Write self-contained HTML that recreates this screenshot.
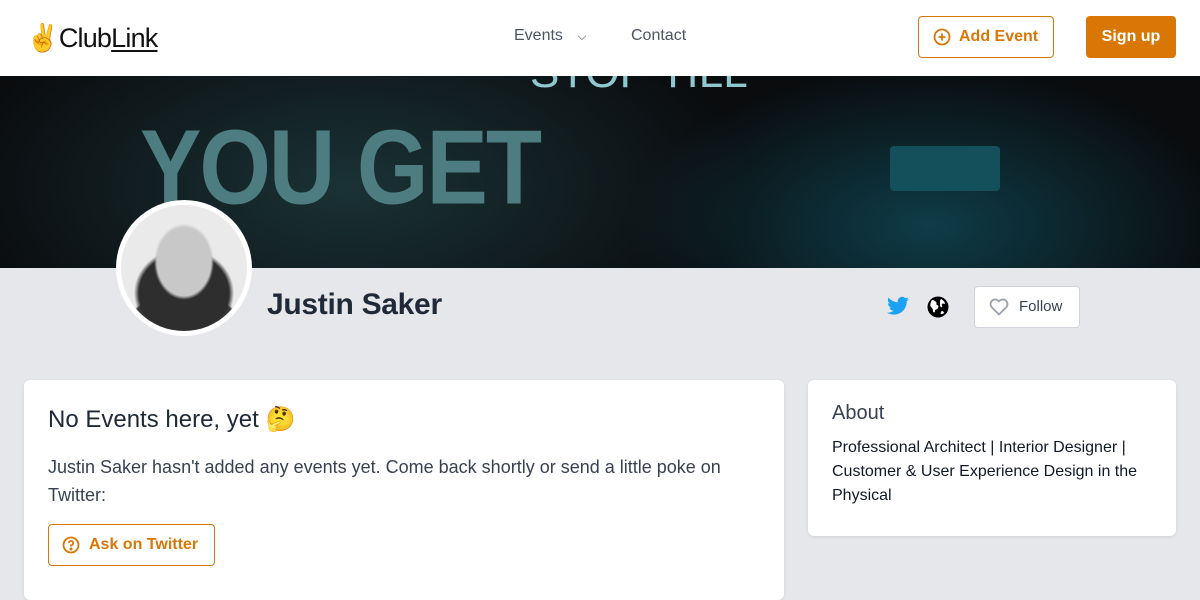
<!DOCTYPE html>
<html><head><meta charset="utf-8"><style>
*{box-sizing:border-box;margin:0;padding:0}
body{width:1200px;height:580px;overflow:hidden;background:#e5e7eb;font-family:"Liberation Sans","Noto Sans CJK JP",sans-serif;color:#111827;position:relative}
.nav{position:absolute;left:0;top:0;width:1200px;height:76px;background:#fff}
.logo{position:absolute;left:26px;top:22px;font-size:27px;color:#111;letter-spacing:-0.8px}
.logo u{text-decoration-thickness:2px;text-underline-offset:3px}
.nl{position:absolute;top:27px;font-size:16px;color:#4b5563}
.btn1{position:absolute;left:918px;top:16px;width:136px;height:42px;border:1px solid #d97706;border-radius:4px;color:#d97706;font-size:16px;font-weight:bold;line-height:40px;padding-left:40px}
.btn2{position:absolute;left:1086px;top:16px;width:90px;height:42px;background:#d97706;border-radius:4px;color:#fff;font-size:16px;font-weight:bold;line-height:42px;text-align:center}
.ban{position:absolute;left:0;top:76px;width:1200px;height:192px;background:radial-gradient(ellipse 300px 160px at 930px 150px,#0e3c48,transparent),radial-gradient(ellipse 400px 200px at 350px 110px,#1a3236,transparent),#0a0c0e;overflow:hidden}
.ban .t{position:absolute;left:140px;top:40px;font-size:92px;font-weight:bold;color:#4d7d80;letter-spacing:-2px;transform:scaleY(1.15)}
.av{position:absolute;left:116px;top:200px;width:136px;height:136px;border-radius:50%;background:#fff;padding:5px}
.av div{width:126px;height:126px;border-radius:50%;background:radial-gradient(ellipse 30px 38px at 50% 45%,#c8c8c8 0 90%,transparent 100%),radial-gradient(ellipse 50px 45px at 50% 70%,#2e2e2e 0 90%,transparent 100%),radial-gradient(ellipse 60px 40px at 50% 100%,#3c3c3c 0 95%,transparent 100%),#eaeaea}
.name{position:absolute;left:267px;top:288px;font-size:30px;font-weight:bold;color:#1f2937;letter-spacing:-0.3px}
.fol{position:absolute;left:974px;top:286px;width:106px;height:42px;background:#fff;border:1px solid #d1d5db;border-radius:4px;font-size:15px;color:#374151;line-height:40px;padding-left:44px}
.card{position:absolute;background:#fff;border-radius:6px;box-shadow:0 1px 3px rgba(0,0,0,.1)}
</style></head><body>
<div class="nav">
<div class="logo">✌️Club<u>Link</u></div>
<div class="nl" style="left:514px">Events <span style="margin-left:10px;font-size:12px">⌵</span></div>
<div class="nl" style="left:631px">Contact</div>
<div class="btn1"><svg style="position:absolute;left:14px;top:11px" width="18" height="18" viewBox="0 0 18 18" fill="none" stroke="#d97706" stroke-width="1.8"><circle cx="9" cy="9" r="7.5"/><path d="M9 5.5v7M5.5 9h7"/></svg>Add Event</div>
<div class="btn2">Sign up</div>
</div>
<div class="ban"><div class="t">YOU GET</div><div style="position:absolute;left:530px;top:-28px;font-size:44px;color:#a8e8f0;opacity:.85">STOP TILL</div><div style="position:absolute;left:890px;top:70px;width:110px;height:45px;background:#14505c;border-radius:4px"></div></div>
<div class="av"><div></div></div>
<div class="name">Justin Saker</div>
<svg style="position:absolute;left:887px;top:296px" width="22" height="20" viewBox="0 0 24 20"><path fill="#1da1f2" d="M24 2.4a10 10 0 0 1-2.8.8A5 5 0 0 0 23.3.4a10 10 0 0 1-3.1 1.2A4.9 4.9 0 0 0 11.8 6 14 14 0 0 1 1.7.9a4.9 4.9 0 0 0 1.5 6.6A5 5 0 0 1 1 6.9a4.9 4.9 0 0 0 3.9 4.8 5 5 0 0 1-2.2.1 4.9 4.9 0 0 0 4.6 3.4A9.9 9.9 0 0 1 0 17.2 14 14 0 0 0 7.5 19.4c9 0 14-7.5 14-14v-.6A10 10 0 0 0 24 2.4z"/></svg>
<svg style="position:absolute;left:927px;top:296px" width="22" height="22" viewBox="0 0 22 22"><circle cx="11" cy="11" r="10.5" fill="#000"/><path fill="#fff" d="M5 4c2 0 3 1 4 2s0 3 1 3 2 1 1 3-3 1-3 3-2 2-2 0-1-3-2-4-1-4 1-7zM14 3c2 1 4 3 4 5-1 0-2-1-3 0s1 2 0 3-2-1-2-2 0-2 0-3 0-2 1-3zM15 15c1 0 2 1 2 2-1 1-2 1-3 1s0-3 1-3z"/></svg>
<div class="fol"><svg style="position:absolute;left:14px;top:11px" width="20" height="18" viewBox="0 0 20 18" fill="none" stroke="#9ca3af" stroke-width="1.8"><path d="M10 16.5L2.5 9A4.5 4.5 0 0 1 10 3.3 4.5 4.5 0 0 1 17.5 9z"/></svg>Follow</div>
<div class="card" style="left:24px;top:380px;width:760px;height:220px">
<div style="position:absolute;left:24px;top:25px;font-size:24px;color:#1f2937">No Events here, yet 🤔</div>
<div style="position:absolute;left:24px;top:73px;width:700px;font-size:18px;line-height:28px;color:#374151">Justin Saker hasn't added any events yet. Come back shortly or send a little poke on Twitter:</div>
<div style="position:absolute;left:24px;top:144px;width:167px;height:42px;border:1px solid #d97706;border-radius:4px;color:#d97706;font-size:16px;font-weight:bold;line-height:40px;padding-left:40px"><svg style="position:absolute;left:13px;top:11px" width="18" height="18" viewBox="0 0 18 18" fill="none" stroke="#d97706" stroke-width="1.8"><circle cx="9" cy="9" r="7.5"/><path d="M6.8 7a2.2 2.2 0 1 1 2.2 2.3V10.5"/><circle cx="9" cy="13" r=".6" fill="#d97706"/></svg>Ask on Twitter</div>
</div>
<div class="card" style="left:808px;top:380px;width:368px;height:156px">
<div style="position:absolute;left:24px;top:22px;font-size:20px;color:#374151">About</div>
<div style="position:absolute;left:24px;top:56px;width:330px;font-size:16px;line-height:24px;color:#111827">Professional Architect | Interior Designer | Customer &amp; User Experience Design in the Physical</div>
</div>
</body></html>
